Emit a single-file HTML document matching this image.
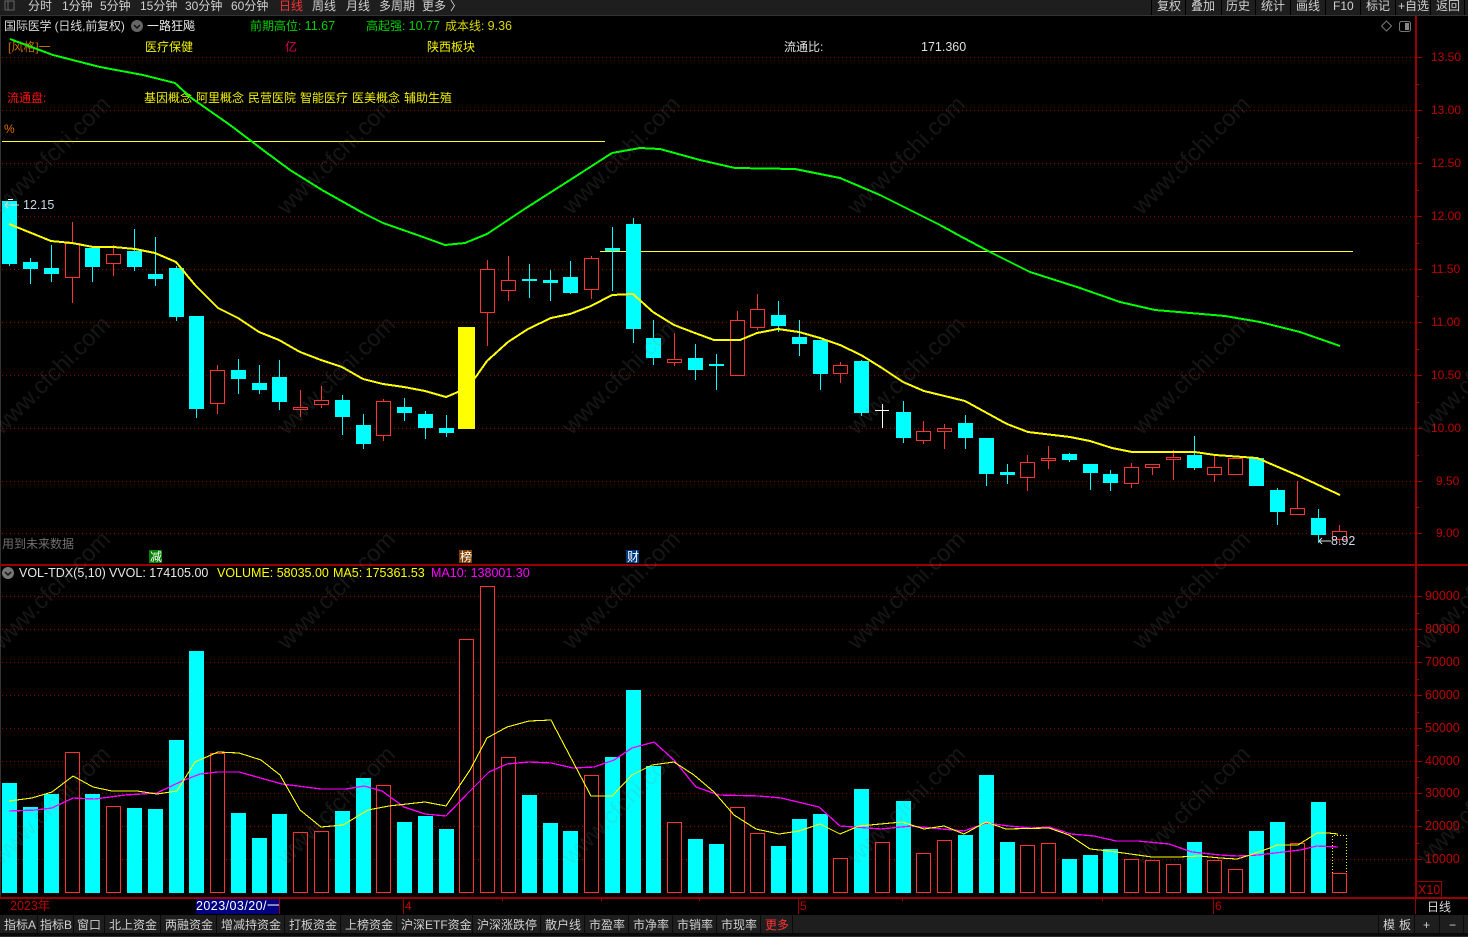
<!DOCTYPE html>
<html><head><meta charset="utf-8"><style>
html,body{margin:0;padding:0;background:#000;width:1468px;height:937px;overflow:hidden}
svg{display:block}
text{font-family:"Liberation Sans","Noto Sans CJK SC",sans-serif;font-size:12px}
.wm{font-size:23.500px;fill:rgba(128,128,128,.17)}
.ax{fill:#c00000}
.tb{fill:#d0d0d0}
.n{font-size:12.500px}
</style></head><body>
<svg width="1468" height="937" viewBox="0 0 1468 937" xmlns="http://www.w3.org/2000/svg">
<rect width="1468" height="937" fill="#000"/>
<!-- top bar -->
<rect x="0" y="0" width="1468" height="15" fill="#1e1e1e"/>
<rect x="0" y="15" width="1468" height="1" fill="#333"/>
<rect x="0" y="16" width="1" height="882" fill="#333"/>
<path d="M5 1h9v9h-9zM8 1v9" stroke="#777" fill="none" opacity=".8"/>
<g class="tb">
<text x="28" y="10" class="tb">分时</text>
<text x="62" y="10" class="tb">1分钟</text>
<text x="100" y="10" class="tb">5分钟</text>
<text x="140" y="10" class="tb">15分钟</text>
<text x="185" y="10" class="tb">30分钟</text>
<text x="231" y="10" class="tb">60分钟</text>
<text x="279" y="10" fill="#ff3232">日线</text>
<text x="312" y="10" class="tb">周线</text>
<text x="346" y="10" class="tb">月线</text>
<text x="379" y="10" class="tb">多周期</text>
<text x="422" y="10" class="tb">更多</text>
<text x="450" y="10" class="tb">〉</text>
<text x="1157" y="10" class="tb">复权</text>
<text x="1191" y="10" class="tb">叠加</text>
<text x="1226" y="10" class="tb">历史</text>
<text x="1261" y="10" class="tb">统计</text>
<text x="1296" y="10" class="tb">画线</text>
<text x="1333" y="10" class="tb">F10</text>
<text x="1366" y="10" class="tb">标记</text>
<text x="1398" y="10" class="tb">+自选</text>
<text x="1436" y="10" class="tb">返回</text>
</g>
<path d="M1151.500 0v15M1185.500 0v15M1221.500 0v15M1255.500 0v15M1290.500 0v15M1325.500 0v15M1360.500 0v15M1395.500 0v15M1430.500 0v15M1464.500 0v15" stroke="#000" stroke-width="1"/>

<!-- grid -->
<path d="M2 57.500H1415M2 110.500H1415M2 163.500H1415M2 216.500H1415M2 269.500H1415M2 322.500H1415M2 375.500H1415M2 428.500H1415M2 481.500H1415M2 533.500H1415M2 596.500H1415M2 629.500H1415M2 662.500H1415M2 695.500H1415M2 728.500H1415M2 761.500H1415M2 793.500H1415M2 826.500H1415M2 859.500H1415" stroke="#8a0000" stroke-width="1" stroke-dasharray="1 3" fill="none"/>

<!-- axes -->
<rect x="1415" y="16" width="2" height="882" fill="#990000"/>
<rect x="0" y="564" width="1468" height="2" fill="#990000"/>
<rect x="0" y="897" width="1468" height="2" fill="#990000"/>
<path d="M1417 57.500h5M1417 110.500h5M1417 163.500h5M1417 216.500h5M1417 269.500h5M1417 322.500h5M1417 375.500h5M1417 428.500h5M1417 481.500h5M1417 533.500h5M1417 596.500h5M1417 629.500h5M1417 662.500h5M1417 695.500h5M1417 728.500h5M1417 761.500h5M1417 793.500h5M1417 826.500h5M1417 859.500h5M1417 84.500h2M1417 137.500h2M1417 190.500h2M1417 243.500h2M1417 296.500h2M1417 349.500h2M1417 402.500h2M1417 455.500h2M1417 507.500h2M1417 613.500h2M1417 646.500h2M1417 679.500h2M1417 712.500h2M1417 745.500h2M1417 777.500h2M1417 810.500h2M1417 843.500h2" stroke="#990000" fill="none"/>
<g class="ax">
<text x="1431" y="61" class="ax">13.50</text>
<text x="1431" y="114" class="ax">13.00</text>
<text x="1431" y="167" class="ax">12.50</text>
<text x="1431" y="220" class="ax">12.00</text>
<text x="1431" y="273" class="ax">11.50</text>
<text x="1431" y="326" class="ax">11.00</text>
<text x="1431" y="379" class="ax">10.50</text>
<text x="1431" y="432" class="ax">10.00</text>
<text x="1436" y="485" class="ax">9.50</text>
<text x="1436" y="537" class="ax">9.00</text>
<text x="1425" y="600" class="ax n">90000</text>
<text x="1425" y="633" class="ax n">80000</text>
<text x="1425" y="666" class="ax n">70000</text>
<text x="1425" y="699" class="ax n">60000</text>
<text x="1425" y="732" class="ax n">50000</text>
<text x="1425" y="765" class="ax n">40000</text>
<text x="1425" y="797" class="ax n">30000</text>
<text x="1425" y="830" class="ax n">20000</text>
<text x="1425" y="863" class="ax n">10000</text>
</g>
<rect x="1416.500" y="881.500" width="25" height="16" fill="none" stroke="#990000"/>
<text x="1418" y="894" class="ax n">X10</text>

<!-- header text -->
<text x="4" y="30" fill="#d8d8d8" letter-spacing="-.15">国际医学 (日线,前复权)</text>
<circle cx="137" cy="26" r="6" fill="#666"/><path d="M134 25l3 3 3-3" stroke="#111" stroke-width="1.500" fill="none"/>
<text x="147" y="30" fill="#e8e8e8">一路狂飚</text>
<text x="250" y="30" fill="#00d000">前期高位: <tspan class="n">11.67</tspan></text>
<text x="366" y="30" fill="#00d000">高起强: <tspan class="n">10.77</tspan></text>
<text x="445" y="30" fill="#d8d800">成本线: <tspan class="n">9.36</tspan></text>
<path d="M1386.500 21l5 5-5 5-5-5z" fill="none" stroke="#777"/>
<rect x="1399.500" y="21.500" width="11" height="10" rx="2" fill="#000" stroke="#777"/><rect x="1405" y="23" width="4" height="7" fill="#888"/>
<text x="8" y="51" fill="#c86e00">[风格]一</text>
<text x="145" y="51" fill="#f0f000">医疗保健</text>
<text x="285" y="51" fill="#e00050">亿</text>
<text x="427" y="51" fill="#f0f000">陕西板块</text>
<text x="784" y="51" fill="#e0e0e0">流通比:</text>
<text x="921" y="51" fill="#e0e0e0" class="n">171.360</text>
<text x="7" y="102" fill="#ff1010">流通盘:</text>
<text x="144" y="102" fill="#f0f000">基因概念</text>
<text x="196" y="102" fill="#f0f000">阿里概念</text>
<text x="248" y="102" fill="#f0f000">民营医院</text>
<text x="300" y="102" fill="#f0f000">智能医疗</text>
<text x="352" y="102" fill="#f0f000">医美概念</text>
<text x="404" y="102" fill="#f0f000">辅助生殖</text>
<text x="4" y="133" fill="#e07000">%</text>
<path d="M2 141.500H605" stroke="#ffff30"/>
<path d="M600 251.500H1353" stroke="#ffff30"/>

<!-- candle wicks cyan -->
<path stroke="#00ffff" fill="none" d="M9.500 201V266M30.500 258V284M51.500 245V282M92.500 248V282M134.500 229V271M155.500 237V286M176.500 266V321M196.500 316V418M238.500 359V394M259.500 365V394M279.500 360V410M342.500 395V435M363.500 414V449M404.500 398V421M425.500 411V439M446.500 415V437M529.500 264V298M550.500 270V301M570.500 261V294M612.500 227V291M633.500 218V343M653.500 320V365M695.500 344V380M716.500 354V390M778.500 301V332M799.500 320V356M820.500 340V390M861.500 360V416M903.500 401V443M965.500 415V449M986.500 438V486M1007.500 464V484M1069.500 453V462M1090.500 464V490M1110.500 470V491M1194.500 436V470M1277.500 488V525M1318.500 509V543"/>
<!-- candle bodies cyan -->
<path fill="#00ffff" d="M2 201h15v63h-15zM23 262h15v7h-15zM44 268h15v6h-15zM85 248h15v19h-15zM127 251h15v16h-15zM148 274h15v5h-15zM169 268h15v49h-15zM189 316h15v93h-15zM231 370h15v9h-15zM252 383h15v7h-15zM272 377h15v25h-15zM335 400h15v17h-15zM356 425h15v19h-15zM397 407h15v6h-15zM418 414h15v14h-15zM439 428h15v5h-15zM522 279h15v2h-15zM543 280h15v3h-15zM563 277h15v16h-15zM605 248h15v3h-15zM626 224h15v105h-15zM646 338h15v20h-15zM688 358h15v12h-15zM709 364h15v2h-15zM771 315h15v11h-15zM792 337h15v7h-15zM813 340h15v34h-15zM854 361h15v52h-15zM896 412h15v26h-15zM958 423h15v15h-15zM979 438h15v36h-15zM1000 472h15v3h-15zM1062 454h15v6h-15zM1083 464h15v9h-15zM1103 474h15v9h-15zM1187 455h15v13h-15zM1249 458h15v28h-15zM1270 490h15v22h-15zM1311 518h15v17h-15z"/>
<!-- red wicks -->
<path stroke="#ff3232" fill="none" d="M72.500 222V303M113.500 245V276M217.500 365V414M300.500 390V417M321.500 386V408M383.500 399V441M487.500 260V346M508.500 256V301M591.500 256V299M674.500 333V366M737.500 311V376M757.500 294V330M840.500 362V383M923.500 421V444M944.500 424V449M1027.500 455V491M1048.500 446V469M1131.500 463V488M1152.500 464V475M1173.500 450V480M1214.500 456V482M1297.500 481V508M1339.500 525V543"/>
<!-- red bodies -->
<path fill="#000" stroke="#ff3232" d="M65.500 243.500h14v34h-14zM106.500 254.500h14v9h-14zM210.500 370.500h14v33h-14zM293.500 407.500h14v2h-14zM314.500 400.500h14v4h-14zM376.500 401.500h14v34h-14zM480.500 269.500h14v43h-14zM501.500 280.500h14v10h-14zM584.500 258.500h14v31h-14zM667.500 359.500h14v3h-14zM730.500 320.500h14v55h-14zM750.500 309.500h14v18h-14zM833.500 365.500h14v8h-14zM916.500 431.500h14v9h-14zM937.500 428.500h14v3h-14zM1020.500 462.500h14v15h-14zM1041.500 458.500h14v2h-14zM1124.500 467.500h14v16h-14zM1145.500 464.500h14v3h-14zM1166.500 457.500h14v2h-14zM1207.500 467.500h14v7h-14zM1228.500 458.500h14v16h-14zM1290.500 508.500h14v6h-14zM1332.500 531.500h14v8h-14z"/>
<!-- white cross -->
<path stroke="#fff" fill="none" d="M875 410.500h14M882.500 404V428"/>
<!-- yellow block -->
<rect x="458" y="327" width="17" height="102" fill="#ffff00"/>

<!-- MA lines price -->
<polyline fill="none" stroke="#00ff00" stroke-width="2" shape-rendering="crispEdges" points="10,39 53,55 100,67 143,75 175,83 190,97 230,125 263,150 290,170 322,190 363,213 383,223 423,237 445,245 465,243 487,234 523,210 570,180 612,153 640,148 660,149 700,160 735,168 795,169 840,178 880,195 910,210 940,225 960,236 990,252 1030,272 1080,288 1120,302 1155,310 1225,316 1260,322 1300,332 1340,346"/>
<polyline fill="none" stroke="#ffff00" stroke-width="2" shape-rendering="crispEdges" points="9,224 51,241 72,243 93,247 114,247 135,249 155,253 176,262 195,285 218,308 238,318 259,332 279,340 300,352 321,360 342,367 363,379 383,384 404,387 425,391 446,397 458,392 475,378 487,361 508,342 528,329 551,318 570,314 591,306 612,295 633,294 653,312 674,325 695,333 714,340 740,340 757,333 778,329 799,332 820,338 840,345 861,355 882,368 903,382 924,391 965,401 1007,424 1028,432 1070,437 1090,441 1112,448 1132,452 1195,452 1215,455 1257,458 1278,467 1299,476 1340,495"/>

<!-- labels in chart -->
<text x="23" y="209" fill="#c8d8e8" class="n">12.15</text>
<path d="M5 205h14M5 205l3-3M5 205l3 3" stroke="#ddd" fill="none"/><rect x="8" y="199" width="5" height="1" fill="#fff"/>
<path d="M1319 541h12M1319 541l3-3M1319 541l3 3" stroke="#ddd" fill="none"/>
<text x="1331" y="545" fill="#c8d8e8" class="n">8.92</text>
<text x="2" y="548" fill="#707070">用到未来数据</text>
<rect x="149" y="550" width="13" height="13" fill="#008000"/><text x="150" y="561" fill="#fff">减</text>
<rect x="459" y="550" width="13" height="13" fill="#804000"/><text x="460" y="561" fill="#fff">榜</text>
<rect x="626" y="550" width="13" height="13" fill="#003a80"/><text x="627" y="561" fill="#fff">财</text>

<!-- vol header -->
<circle cx="8" cy="573" r="6" fill="#777"/><path d="M5 572l3 3 3-3" stroke="#111" stroke-width="1.500" fill="none"/>
<text x="19" y="577" fill="#e8e8e8" class="n">VOL-TDX(5,10)</text>
<text x="109" y="577" fill="#e8e8e8" class="n">VVOL: 174105.00</text>
<text x="217" y="577" fill="#ffff00" class="n">VOLUME: 58035.00</text>
<text x="333" y="577" fill="#ffff00" class="n">MA5: 175361.53</text>
<text x="431" y="577" fill="#ff00ff" class="n">MA10: 138001.30</text>

<!-- volume bars cyan -->
<path fill="#00ffff" d="M2 783h15v110h-15zM23 807h15v86h-15zM44 794h15v99h-15zM85 794h15v99h-15zM127 808h15v85h-15zM148 809h15v84h-15zM169 740h15v153h-15zM189 651h15v242h-15zM231 813h15v80h-15zM252 838h15v55h-15zM272 814h15v79h-15zM335 811h15v82h-15zM356 778h15v115h-15zM397 822h15v71h-15zM418 816h15v77h-15zM439 829h15v64h-15zM522 795h15v98h-15zM543 823h15v70h-15zM563 831h15v62h-15zM605 757h15v136h-15zM626 690h15v203h-15zM646 766h15v127h-15zM688 839h15v54h-15zM709 844h15v49h-15zM771 846h15v47h-15zM792 819h15v74h-15zM813 814h15v79h-15zM854 789h15v104h-15zM896 801h15v92h-15zM958 835h15v58h-15zM979 775h15v118h-15zM1000 842h15v51h-15zM1062 859h15v34h-15zM1083 855h15v38h-15zM1103 849h15v44h-15zM1187 842h15v51h-15zM1249 831h15v62h-15zM1270 822h15v71h-15zM1311 802h15v91h-15z"/>
<!-- volume bars red -->
<path fill="#000" stroke="#ff3232" d="M65.500 752.500h14v140h-14zM106.500 806.500h14v86h-14zM210.500 753.500h14v139h-14zM293.500 832.500h14v60h-14zM314.500 831.500h14v61h-14zM376.500 785.500h14v107h-14zM459.500 639.500h14v253h-14zM480.500 586.500h14v306h-14zM501.500 757.500h14v135h-14zM584.500 775.500h14v117h-14zM667.500 822.500h14v70h-14zM730.500 807.500h14v85h-14zM750.500 833.500h14v59h-14zM833.500 858.500h14v34h-14zM875.500 842.500h14v50h-14zM916.500 853.500h14v39h-14zM937.500 840.500h14v52h-14zM1020.500 845.500h14v47h-14zM1041.500 843.500h14v49h-14zM1124.500 859.500h14v33h-14zM1145.500 860.500h14v32h-14zM1166.500 864.500h14v28h-14zM1207.500 860.500h14v32h-14zM1228.500 869.500h14v23h-14zM1290.500 843.500h14v49h-14zM1332.500 873.500h14v19h-14z"/>
<path d="M1332.500 873V835.500H1346.500V873" fill="none" stroke="#ffff00" stroke-dasharray="1 2"/>

<!-- volume MA -->
<polyline fill="none" stroke="#ff00ff" stroke-width="1.300" shape-rendering="crispEdges" points="9,811 36,810 52,808 73,798 95,799 125,795 157,793 182,781 200,774 218,772 239,772 282,784 321,789 346,789 364,786 382,791 404,807 425,814 446,816 468,793 489,772 507,764 529,762 551,763 573,768 594,767 614,760 632,748 654,742 674,760 696,787 719,795 759,796 781,798 819,807 840,826 881,829 911,826 942,829 964,831 986,823 1009,826 1031,828 1049,827 1071,834 1094,836 1116,841 1138,841 1169,844 1192,852 1220,855 1237,856 1258,855 1300,850 1317,846 1338,847"/>
<polyline fill="none" stroke="#ffff00" stroke-width="1.100" shape-rendering="crispEdges" points="9,801 32,798 52,792 73,776 93,787 112,791 137,791 157,794 177,791 195,762 218,752 239,753 261,760 280,775 300,810 321,827 343,825 368,810 389,806 425,802 446,806 470,770 487,738 507,727 529,721 551,720 591,796 612,796 632,775 652,765 674,762 694,775 714,792 734,815 756,829 779,834 799,831 820,824 840,834 859,826 902,822 924,829 944,826 964,834 986,822 1006,829 1049,828 1069,835 1090,849 1109,851 1152,857 1178,857 1200,856 1220,858 1237,859 1250,855 1270,848 1277,845 1298,845 1317,833 1328,833 1338,834"/>

<!-- bottom axis row -->
<text x="10" y="910" fill="#c00000" class="n">2023年</text>
<rect x="196" y="899" width="83" height="15" fill="#000080"/>
<text x="196" y="910" fill="#fff" class="n" letter-spacing=".45">2023/03/20/一</text>
<path d="M279.500 899v15M403.500 899v15M798.500 899v15M1213.500 899v15M1415.500 899v15" stroke="#990000" fill="none"/>
<path d="M502.500 899v2M601.500 899v2M699.500 899v2M902.500 899v2M1102.500 899v2" stroke="#990000" fill="none"/>
<text x="405" y="910" fill="#c00000">4</text>
<text x="800" y="910" fill="#c00000">5</text>
<text x="1215" y="910" fill="#c00000">6</text>
<text x="1427" y="911" fill="#d8d8d8">日线</text>

<!-- bottom tabs -->
<rect x="0" y="915" width="1468" height="18" fill="#1e1e1e"/>
<rect x="0" y="933" width="1468" height="4" fill="#0a0a0a"/>
<path d="M0 936.500H1468" stroke="#2a2a2a"/>
<path d="M37.500 915v18M73.500 915v18M104.500 915v18M160.500 915v18M216.500 915v18M284.500 915v18M340.500 915v18M396.500 915v18M472.500 915v18M540.500 915v18M584.500 915v18M628.500 915v18M672.500 915v18M716.500 915v18M760.500 915v18M792.500 915v18M1378.500 915v18M1414.500 915v18M1439.500 915v18M1463.500 915v18" stroke="#0a0a0a" fill="none"/>
<g>
<text x="4" y="929" class="tb">指标A</text>
<text x="40" y="929" class="tb">指标B</text>
<text x="77" y="929" class="tb">窗口</text>
<text x="109" y="929" class="tb">北上资金</text>
<text x="165" y="929" class="tb">两融资金</text>
<text x="221" y="929" class="tb">增减持资金</text>
<text x="289" y="929" class="tb">打板资金</text>
<text x="345" y="929" class="tb">上榜资金</text>
<text x="401" y="929" class="tb">沪深ETF资金</text>
<text x="477" y="929" class="tb">沪深涨跌停</text>
<text x="545" y="929" class="tb">散户线</text>
<text x="589" y="929" class="tb">市盈率</text>
<text x="633" y="929" class="tb">市净率</text>
<text x="677" y="929" class="tb">市销率</text>
<text x="721" y="929" class="tb">市现率</text>
<text x="765" y="929" fill="#ff3232">更多</text>
<text x="1383" y="929" class="tb">模</text>
<text x="1399" y="929" class="tb">板</text>
<text x="1423" y="929" class="tb">+</text>
<text x="1449" y="929" class="tb">−</text>
</g>

<!-- watermark -->
<g class="wm">
<text class="wm" text-anchor="middle" transform="translate(51,155) rotate(-45)" x="0" y="8">www.cfchi.com</text>
<text class="wm" text-anchor="middle" transform="translate(336,155) rotate(-45)" x="0" y="8">www.cfchi.com</text>
<text class="wm" text-anchor="middle" transform="translate(621,155) rotate(-45)" x="0" y="8">www.cfchi.com</text>
<text class="wm" text-anchor="middle" transform="translate(906,155) rotate(-45)" x="0" y="8">www.cfchi.com</text>
<text class="wm" text-anchor="middle" transform="translate(1191,155) rotate(-45)" x="0" y="8">www.cfchi.com</text>
<text class="wm" text-anchor="middle" transform="translate(51,375) rotate(-45)" x="0" y="8">www.cfchi.com</text>
<text class="wm" text-anchor="middle" transform="translate(336,375) rotate(-45)" x="0" y="8">www.cfchi.com</text>
<text class="wm" text-anchor="middle" transform="translate(621,375) rotate(-45)" x="0" y="8">www.cfchi.com</text>
<text class="wm" text-anchor="middle" transform="translate(906,375) rotate(-45)" x="0" y="8">www.cfchi.com</text>
<text class="wm" text-anchor="middle" transform="translate(1191,375) rotate(-45)" x="0" y="8">www.cfchi.com</text>
<text class="wm" text-anchor="middle" transform="translate(1476,375) rotate(-45)" x="0" y="8">www.cfchi.com</text>
<text class="wm" text-anchor="middle" transform="translate(51,590) rotate(-45)" x="0" y="8">www.cfchi.com</text>
<text class="wm" text-anchor="middle" transform="translate(336,590) rotate(-45)" x="0" y="8">www.cfchi.com</text>
<text class="wm" text-anchor="middle" transform="translate(621,590) rotate(-45)" x="0" y="8">www.cfchi.com</text>
<text class="wm" text-anchor="middle" transform="translate(906,590) rotate(-45)" x="0" y="8">www.cfchi.com</text>
<text class="wm" text-anchor="middle" transform="translate(1191,590) rotate(-45)" x="0" y="8">www.cfchi.com</text>
<text class="wm" text-anchor="middle" transform="translate(1476,590) rotate(-45)" x="0" y="8">www.cfchi.com</text>
<text class="wm" text-anchor="middle" transform="translate(51,805) rotate(-45)" x="0" y="8">www.cfchi.com</text>
<text class="wm" text-anchor="middle" transform="translate(336,805) rotate(-45)" x="0" y="8">www.cfchi.com</text>
<text class="wm" text-anchor="middle" transform="translate(621,805) rotate(-45)" x="0" y="8">www.cfchi.com</text>
<text class="wm" text-anchor="middle" transform="translate(906,805) rotate(-45)" x="0" y="8">www.cfchi.com</text>
<text class="wm" text-anchor="middle" transform="translate(1191,805) rotate(-45)" x="0" y="8">www.cfchi.com</text>
<text class="wm" text-anchor="middle" transform="translate(1476,805) rotate(-45)" x="0" y="8">www.cfchi.com</text>
</g>
</svg>
</body></html>
